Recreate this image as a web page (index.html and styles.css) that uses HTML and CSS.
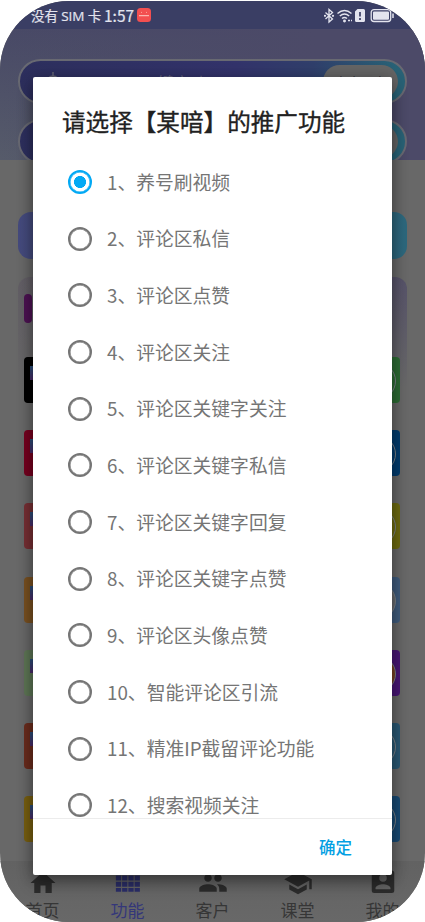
FILE: index.html
```html
<!DOCTYPE html>
<html lang="zh-CN">
<head>
<meta charset="utf-8">
<title>推广功能</title>
<link rel="stylesheet" href="styles.css">
</head>
<body>
<div class="screen">
  <header class="status">
    <span class="carrier">没有 SIM 卡</span><span class="clock">1:57</span>
    <svg class="app-badge" width="14" height="14" viewBox="0 0 14 14"><rect width="14" height="14" rx="3.5" fill="#f34f50"/><path d="M4 4l1 .8M10 4l-1 .8" stroke="#fba" stroke-width=".8"/><path d="M2 7.700h10" stroke="#fbb5ae" stroke-width="1.200"/></svg>
    <svg class="indicators" width="72" height="16" viewBox="0 0 72 16" fill="none" stroke="#e3e4ee" stroke-width="1.3">
      <path d="M1.500 4.500l7 6.500-3.500 3V1.500l3.500 3-7 6.500"/><circle cx="1" cy="7.800" r=".5"/><circle cx="9" cy="7.800" r=".5"/>
      <path d="M13.500 5.500q7-6 14 0M15.800 8q4.700-4 9.400 0M18 10.500q2.500-2 5 0" stroke-width="1.500"/><circle cx="20.500" cy="13" r=".8" fill="#e3e4ee"/><path d="M24 12.500h2M27 12.500h1"/>
      <path d="M33.500 1h6a1.500 1.500 0 0 1 1.500 1.500v10a1.500 1.500 0 0 1-1.500 1.500h-7a1.500 1.500 0 0 1-1.500-1.500v-9z" fill="#e3e4ee" stroke="none"/><path d="M36 4v4.500M36 10v2" stroke="#3a3e63" stroke-width="1.700"/>
      <rect x="47.200" y="1.700" width="19.500" height="11.800" rx="2.800"/><rect x="49" y="3.500" width="16" height="8.200" rx="1" fill="#e3e4ee" stroke="none"/><path d="M69 5.500v4.500" stroke-width="1.500"/>
    </svg>
  </header>
  <section class="hero">
    <div class="pill">
      <svg class="pill-icon" width="18" height="20" viewBox="0 0 18 20" fill="none" stroke="#656575" stroke-width="1.500"><path d="M9 0v4"/><circle cx="9" cy="10" r="6"/></svg>
      <span class="pill-title">一键启动</span>
      <span class="pill-button">点击开启</span>
    </div>
    <div class="pill"><span class="pill-button"></span></div>
  </section>
  <main class="content">
    <div class="banner"></div>
    <div class="panel">
      <div class="panel-mark"></div>
      <div class="cards">
        <div class="card black"></div><div class="card green"></div>
        <div class="card red"></div><div class="card blue"></div>
        <div class="card coral"></div><div class="card yellow"></div>
        <div class="card orange"></div><div class="card sky"></div>
        <div class="card sage"></div><div class="card purple"></div>
        <div class="card rust"></div><div class="card teal"></div>
        <div class="card gold"></div><div class="card azure"></div>
      </div>
    </div>
  </main>
  <nav class="tabs">
    <div class="tab"><svg width="30" height="30" viewBox="0 0 24 24"><path d="M10 20v-6h4v6h5v-8h3L12 3 2 12h3v8z"/></svg><span>首页</span></div>
    <div class="tab active"><svg width="30" height="30" viewBox="0 0 24 24"><path d="M2.300 1h4.200v4H2.300zM7.300 1h4.200v4H7.300zM12.300 1h4.200v4h-4.200zM17.300 1h4.200v4h-4.200zM2.300 6h4.200v4H2.300zM7.300 6h4.200v4H7.300zM12.300 6h4.200v4h-4.200zM17.300 6h4.200v4h-4.200zM2.300 11h4.200v4H2.300zM7.300 11h4.200v4H7.300zM12.300 11h4.200v4h-4.200zM17.300 11h4.200v4h-4.200zM2.300 16h4.200v3H2.300zM7.300 16h4.200v3H7.300zM12.300 16h4.200v3h-4.200zM17.300 16h4.200v3h-4.200z"/></svg><span>功能</span></div>
    <div class="tab"><svg width="30" height="30" viewBox="0 0 24 24"><path d="M16 11c1.660 0 2.990-1.340 2.990-3S17.660 5 16 5s-3 1.340-3 3 1.340 3 3 3zm-8 0c1.660 0 2.990-1.340 2.990-3S9.660 5 8 5 5 6.340 5 8s1.340 3 3 3zm0 2c-2.330 0-7 1.170-7 3.500V19h14v-2.500C15 14.170 10.330 13 8 13zm8 0l-.97.05C16.190 13.890 17 15.020 17 16.500V19h6v-2.500c0-2.330-4.670-3.500-7-3.500z"/></svg><span>客户</span></div>
    <div class="tab"><svg width="30" height="30" viewBox="0 0 24 24"><path d="M5 13.180v4L12 21l7-3.820v-4L12 17zM12 3L1 9l11 6 9-4.910V17h2V9z"/></svg><span>课堂</span></div>
    <div class="tab"><svg width="30" height="30" viewBox="0 0 24 24"><path fill-rule="evenodd" d="M5 2h14a2 2 0 0 1 2 2v14a2 2 0 0 1-2 2H5a2 2 0 0 1-2-2V4c0-1.100.9-2 2-2zm10 6a3 3 0 1 0-6 0 3 3 0 0 0 6 0zM6 17h12v-1c0-2-4-3.100-6-3.100S6 14 6 16z"/></svg><span>我的</span></div>
  </nav>
  <div class="dialog" role="dialog">
    <h1>请选择【某喑】的推广功能</h1>
    <ul class="options">
      <li class="checked"><i></i><span>1、养号刷视频</span></li>
      <li><i></i><span>2、评论区私信</span></li>
      <li><i></i><span>3、评论区点赞</span></li>
      <li><i></i><span>4、评论区关注</span></li>
      <li><i></i><span>5、评论区关键字关注</span></li>
      <li><i></i><span>6、评论区关键字私信</span></li>
      <li><i></i><span>7、评论区关键字回复</span></li>
      <li><i></i><span>8、评论区关键字点赞</span></li>
      <li><i></i><span>9、评论区头像点赞</span></li>
      <li><i></i><span>10、智能评论区引流</span></li>
      <li><i></i><span>11、精准IP截留评论功能</span></li>
      <li><i></i><span>12、搜索视频关注</span></li>
    </ul>
    <footer><button>确定</button></footer>
  </div>
</div>
</body>
</html>
```
FILE: styles.css
```css
* { box-sizing: border-box; }
body { margin: 0; background: #fff; font-family: "Noto Sans CJK SC", sans-serif; overflow: hidden; }
.screen {
  position: relative;
  display: flex;
  flex-direction: column;
  width: 425px;
  height: 921px;
  margin-top: 1px;
  border-radius: 69px;
  overflow: hidden;
  background: #686868;
}
.status {
  display: flex;
  align-items: center;
  height: 28px;
  padding: 2px 29px 0 31px;
  background: #3a3e64;
  color: #e3e4ee;
  flex: none;
}
.carrier { font: 13.500px "Open Sans", "Noto Sans CJK SC", sans-serif; letter-spacing: -.1px; white-space: nowrap; width: 73px; margin-top: -2px; -webkit-text-stroke: .2px; }
.clock { font-size: 15.500px; line-height: 20px; width: 33px; margin-top: -2px; -webkit-text-stroke: .2px; }
.app-badge { margin-top: -2px; }
.indicators { margin-left: auto; }
.hero {
  display: flex;
  flex-direction: column;
  gap: 15px;
  height: 131px;
  padding: 30px 18px 0;
  background: linear-gradient(90deg, transparent, #4c4a68 75%), linear-gradient(#484966, #565b6a);
  flex: none;
  overflow: hidden;
}
.pill {
  display: flex;
  align-items: center;
  height: 45px;
  padding: 0 7px 0 24px;
  border: 2px solid #686972;
  border-radius: 23px;
  background: linear-gradient(100deg, #2d2f5d, #33336b 55%, #303f6b 75%, #296276 96%);
  flex: none;
}
.pill-icon { margin-right: 80px; }
.pill-title { color: #62637d; font-size: 16px; }
.pill-button {
  width: 75px;
  height: 33px;
  margin-left: auto;
  border-radius: 17px;
  background: #656565;
  color: #30303a;
  font-size: 13px;
  line-height: 34px;
  text-align: center;
}
.content { flex: 1; min-height: 0; padding: 52px 18px 0; overflow: hidden; }
.banner { height: 47px; border-radius: 13px; background: linear-gradient(90deg, #454a7d, #2d687d); }
.panel {
  height: 600px;
  margin-top: 18px;
  padding: 17px 7px 0 6px;
  border-radius: 12px;
  background: linear-gradient(transparent, #686868 110px), linear-gradient(90deg, #625e65, #57536a);
}
.panel-mark { width: 8px; height: 29px; border-radius: 4px; background: #4c1252; }
.cards { display: grid; grid-template-columns: 1fr 1fr; gap: 27.200px 60px; margin-top: 34px; }
.card { position: relative; height: 46px; border-radius: 4px; overflow: hidden; }
.card:nth-child(odd)::before {
  content: "";
  position: absolute;
  left: 6px;
  top: 9px;
  width: 3px;
  height: 14px;
  background: linear-gradient(#284f78, #4b2967);
}
.card:nth-child(even)::after {
  content: "";
  position: absolute;
  right: 4px;
  top: 5px;
  width: 36px;
  height: 36px;
  border: 1px solid #7b8288;
  border-radius: 50%;
}
.black { background: #000; }
.green { background: #2c6b34; }
.red { background: #75001f; }
.blue { background: #003b6d; }
.coral { background: #762f34; }
.yellow { background: #6d6a10; }
.orange { background: #785021; }
.sky { background: #3f5b7c; }
.card.sky::after { background: #66696e; }
.sage { background: #5d7555; }
.purple { background: #481674; }
.card.purple::after { background: #754020; }
.rust { background: #6a2c1d; }
.teal { background: #2a5873; }
.gold { background: #775e10; }
.azure { background: #184a73; }
.tabs {
  display: flex;
  height: 61px;
  padding-top: 7px;
  border-top: 1px solid #626262;
  background: linear-gradient(#626262, #686868);
  flex: none;
}
.tab {
  display: flex;
  flex: 1;
  flex-direction: column;
  align-items: center;
  color: #363636;
  font-size: 17px;
  line-height: 24px;
}
.tab svg { display: block; fill: #2c2c2c; margin: -1px 0 0; flex: none; }
.tab.active { color: #34377a; }
.tab.active svg { fill: #2b2e68; }
.dialog {
  position: absolute;
  left: 33px;
  top: 76px;
  display: flex;
  flex-direction: column;
  width: 359px;
  height: 798px;
  border-radius: 2px;
  background: #fff;
  box-shadow: 0 8px 16px rgba(0, 0, 0, .32), 0 1px 15px rgba(0, 0, 0, .22);
}
h1 {
  margin: 0;
  padding: 26px 0 0 29px;
  color: #212121;
  font-size: 23.600px;
  font-weight: 400;
  line-height: 36px;
  white-space: nowrap;
  -webkit-text-stroke: .35px #212121;
}
.options { flex: 1; min-height: 0; margin: 0; padding: 14.500px 0 0 35px; overflow: hidden; list-style: none; }
.options li {
  display: flex;
  align-items: center;
  height: 56.700px;
  color: #757575;
  font-size: 18.800px;
  line-height: 28px;
  white-space: nowrap;
}
.options span { padding-bottom: .500px; }
.options i { width: 24px; height: 24px; margin-right: 15px; border: 2px solid #757575; border-radius: 50%; flex: none; box-shadow: inset 0 0 0 .5px #757575; }
.options .checked i { border-color: #03a9f4; box-shadow: inset 0 0 0 .5px #03a9f4; background: radial-gradient(circle, #03a9f4 5.700px, #fff 6.300px); }
footer { display: flex; justify-content: flex-end; height: 57px; padding: 0 40px 0 0; border-top: 1px solid #ececec; flex: none; }
button { border: 0; padding: 0; background: none; color: #039fe3; font: 500 16.500px "Noto Sans CJK SC", sans-serif; }
```
